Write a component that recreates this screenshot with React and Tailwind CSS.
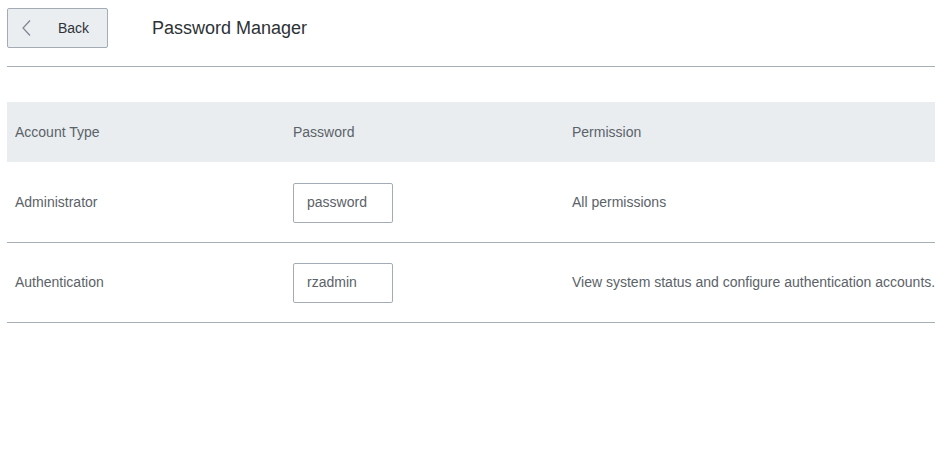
import React from 'react';

const rows = [
  { type: 'Administrator', password: 'password', permission: 'All permissions' },
  { type: 'Authentication', password: 'rzadmin', permission: 'View system status and configure authentication accounts.' },
];

const App = () => {
  return (
    <div className="w-[950px] h-[468px] bg-white font-['Liberation_Sans',Arial,sans-serif] text-[#5b6268] text-[14px]">
      <div className="px-[7px] pt-[8px]">
        <div className="flex items-center h-[40px]">
          <button className="flex items-center w-[101px] h-[40px] border border-[#a3acb4] bg-[#ebeef1] rounded-[2px] text-[#2f3438] text-[14px]">
            <svg width="12" height="18" viewBox="0 0 12 18" className="ml-[13px]">
              <path d="M9 1.5 L2 9 L9 16.5" fill="none" stroke="#7c858d" strokeWidth="1.2" />
            </svg>
            <span className="ml-[25px]">Back</span>
          </button>
          <h1 className="ml-[44px] text-[18px] text-[#2d3236] leading-none">Password Manager</h1>
        </div>
        <div className="mt-[18px] w-[928px] border-t border-[#a7afb6]" />

        <div className="mt-[35px] w-[928px]">
          <div className="grid grid-cols-[278px_279px_1fr] h-[60px] items-center bg-[#e9edf0]">
            <div className="pl-[8px]">Account Type</div>
            <div className="pl-[8px]">Password</div>
            <div className="pl-[8px]">Permission</div>
          </div>
          {rows.map((r, i) => (
            <div
              key={r.type}
              className={i === 0
                ? 'grid grid-cols-[278px_279px_1fr] h-[81px] pt-[1px] items-center border-b border-[#a7afb6]'
                : 'grid grid-cols-[278px_279px_1fr] h-[80px] items-center border-b border-[#a7afb6]'}
            >
              <div className="pl-[8px]">{r.type}</div>
              <div className="pl-[8px]">
                <div className="w-[100px] h-[40px] border border-[#a3acb4] rounded-[2px] flex items-center pl-[13px]">
                  {r.password}
                </div>
              </div>
              <div className="pl-[8px] whitespace-nowrap">{r.permission}</div>
            </div>
          ))}
        </div>
      </div>
    </div>
  );
};

export default App;
